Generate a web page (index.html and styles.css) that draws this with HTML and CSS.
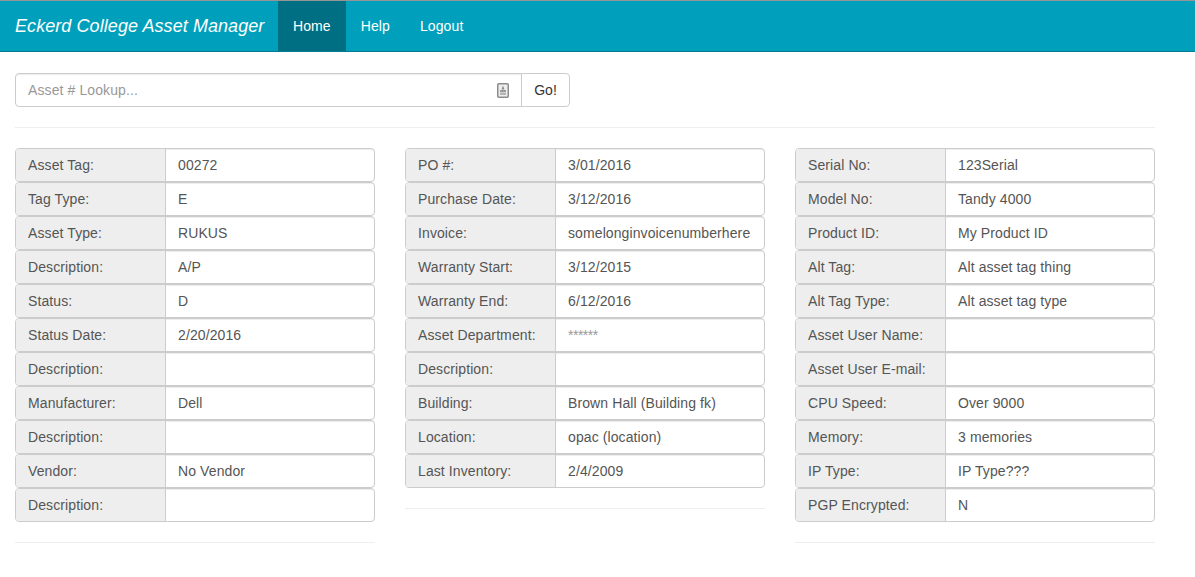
FILE: index.html
```html
<!DOCTYPE html>
<html lang="en">
<head>
    <meta charset="UTF-8">
    <title>Eckerd College Asset Manager</title>
    <link rel="stylesheet" href="styles.css">
</head>
<body>
    <nav class="navbar">
        <a class="brand" href="#">Eckerd College Asset Manager</a>
        <a class="nav-link active" href="#">Home</a>
        <a class="nav-link" href="#">Help</a>
        <a class="nav-link" href="#">Logout</a>
    </nav>

    <div class="container">
        <form class="lookup">
            <div class="lookup-field">
                <input class="lookup-input" type="text" placeholder="Asset # Lookup...">
                <svg class="lookup-icon" width="12" height="15" viewBox="0 0 12 15">
                    <rect x="0.75" y="0.75" width="10.5" height="13.5" rx="1" fill="#eee" stroke="#8c8c8c" stroke-width="1.5"/>
                    <path d="M6 2.5 L7.5 6.5 H4.5 Z" fill="#8c8c8c"/>
                    <rect x="3" y="7" width="6" height="2" fill="#9a9a9a"/>
                    <rect x="3" y="9.5" width="6" height="2.5" fill="#b5b5b5"/>
                </svg>
            </div>
            <button class="lookup-btn" type="button">Go!</button>
        </form>
        <hr class="rule">

        <div class="columns">
            <div class="column">
                <div class="row"><span class="label">Asset Tag:</span><span class="value">00272</span></div>
                <div class="row"><span class="label">Tag Type:</span><span class="value">E</span></div>
                <div class="row"><span class="label">Asset Type:</span><span class="value">RUKUS</span></div>
                <div class="row"><span class="label">Description:</span><span class="value">A/P</span></div>
                <div class="row"><span class="label">Status:</span><span class="value">D</span></div>
                <div class="row"><span class="label">Status Date:</span><span class="value">2/20/2016</span></div>
                <div class="row"><span class="label">Description:</span><span class="value"></span></div>
                <div class="row"><span class="label">Manufacturer:</span><span class="value">Dell</span></div>
                <div class="row"><span class="label">Description:</span><span class="value"></span></div>
                <div class="row"><span class="label">Vendor:</span><span class="value">No Vendor</span></div>
                <div class="row"><span class="label">Description:</span><span class="value"></span></div>
                <hr class="rule">
            </div>
            <div class="column">
                <div class="row"><span class="label">PO #:</span><span class="value">3/01/2016</span></div>
                <div class="row"><span class="label">Purchase Date:</span><span class="value">3/12/2016</span></div>
                <div class="row"><span class="label">Invoice:</span><span class="value">somelonginvoicenumberhere</span></div>
                <div class="row"><span class="label">Warranty Start:</span><span class="value">3/12/2015</span></div>
                <div class="row"><span class="label">Warranty End:</span><span class="value">6/12/2016</span></div>
                <div class="row"><span class="label">Asset Department:</span><span class="value masked">******</span></div>
                <div class="row"><span class="label">Description:</span><span class="value"></span></div>
                <div class="row"><span class="label">Building:</span><span class="value">Brown Hall (Building fk)</span></div>
                <div class="row"><span class="label">Location:</span><span class="value">opac (location)</span></div>
                <div class="row"><span class="label">Last Inventory:</span><span class="value">2/4/2009</span></div>
                <hr class="rule">
            </div>
            <div class="column">
                <div class="row"><span class="label">Serial No:</span><span class="value">123Serial</span></div>
                <div class="row"><span class="label">Model No:</span><span class="value">Tandy 4000</span></div>
                <div class="row"><span class="label">Product ID:</span><span class="value">My Product ID</span></div>
                <div class="row"><span class="label">Alt Tag:</span><span class="value">Alt asset tag thing</span></div>
                <div class="row"><span class="label">Alt Tag Type:</span><span class="value">Alt asset tag type</span></div>
                <div class="row"><span class="label">Asset User Name:</span><span class="value"></span></div>
                <div class="row"><span class="label">Asset User E-mail:</span><span class="value"></span></div>
                <div class="row"><span class="label">CPU Speed:</span><span class="value">Over 9000</span></div>
                <div class="row"><span class="label">Memory:</span><span class="value">3 memories</span></div>
                <div class="row"><span class="label">IP Type:</span><span class="value">IP Type???</span></div>
                <div class="row"><span class="label">PGP Encrypted:</span><span class="value">N</span></div>
                <hr class="rule">
            </div>
        </div>
    </div>
</body>
</html>
```

FILE: styles.css
```css
/* Page */
* {
    box-sizing: border-box;
}

body {
    margin: 0;
    font-family: "Liberation Sans", Arial, sans-serif;
    font-size: 14px;
    line-height: 20px;
    letter-spacing: 0.1px;
    color: #555;
    background-color: #fff;
}

/* Navbar */
.navbar {
    display: flex;
    height: 52px;
    background-color: #00a0bc;
    border-top: 1px solid #969696;
    border-bottom: 1px solid #007d93;
}

.brand {
    width: 278px;
    padding: 15px 0 15px 15px;
    font-size: 18px;
    font-style: italic;
    letter-spacing: 0.07px;
    color: #fff;
    text-decoration: none;
}

.nav-link {
    padding: 15px;
    color: #fff;
    text-decoration: none;
}

.nav-link.active {
    background-color: #006f83;
}

/* Content */
.container {
    width: 1170px;
    padding: 21px 15px 0;
}

.rule {
    height: 0;
    margin: 20px 0;
    border: 0;
    border-top: 1px solid #eee;
}

/* Lookup */
.lookup {
    display: flex;
    width: 555px;
    height: 34px;
}

.lookup-field {
    flex: 1;
    display: flex;
    align-items: center;
    padding-right: 12px;
    border: 1px solid #ccc;
    border-radius: 4px 0 0 4px;
    box-shadow: inset 0 1px 1px rgba(0, 0, 0, 0.075);
}

.lookup-input {
    flex: 1;
    min-width: 0;
    padding: 0 12px;
    border: 0;
    outline: 0;
    background: transparent;
    font-family: inherit;
    font-size: 14px;
    letter-spacing: 0.1px;
    color: #555;
}

.lookup-input::placeholder {
    color: #999;
    opacity: 1;
}

.lookup-btn {
    width: 49px;
    margin-left: -1px;
    padding: 0;
    border: 1px solid #ccc;
    border-radius: 0 4px 4px 0;
    background-color: #fff;
    font-family: inherit;
    font-size: 14px;
    color: #333;
}

/* Columns of rows */
.columns {
    display: grid;
    grid-template-columns: repeat(3, 360px);
    column-gap: 30px;
    align-items: start;
}

.row {
    display: flex;
    height: 34px;
    border: 1px solid #ccc;
    border-radius: 4px;
    overflow: hidden;
}

.label {
    width: 150px;
    flex-shrink: 0;
    padding: 6px 12px;
    background-color: #eee;
    border-right: 1px solid #ccc;
    white-space: nowrap;
}

.value {
    flex: 1;
    padding: 6px 12px;
    white-space: nowrap;
    box-shadow: inset 0 1px 1px rgba(0, 0, 0, 0.075);
}

.value.masked {
    color: #999;
    letter-spacing: -0.5px;
}
```
